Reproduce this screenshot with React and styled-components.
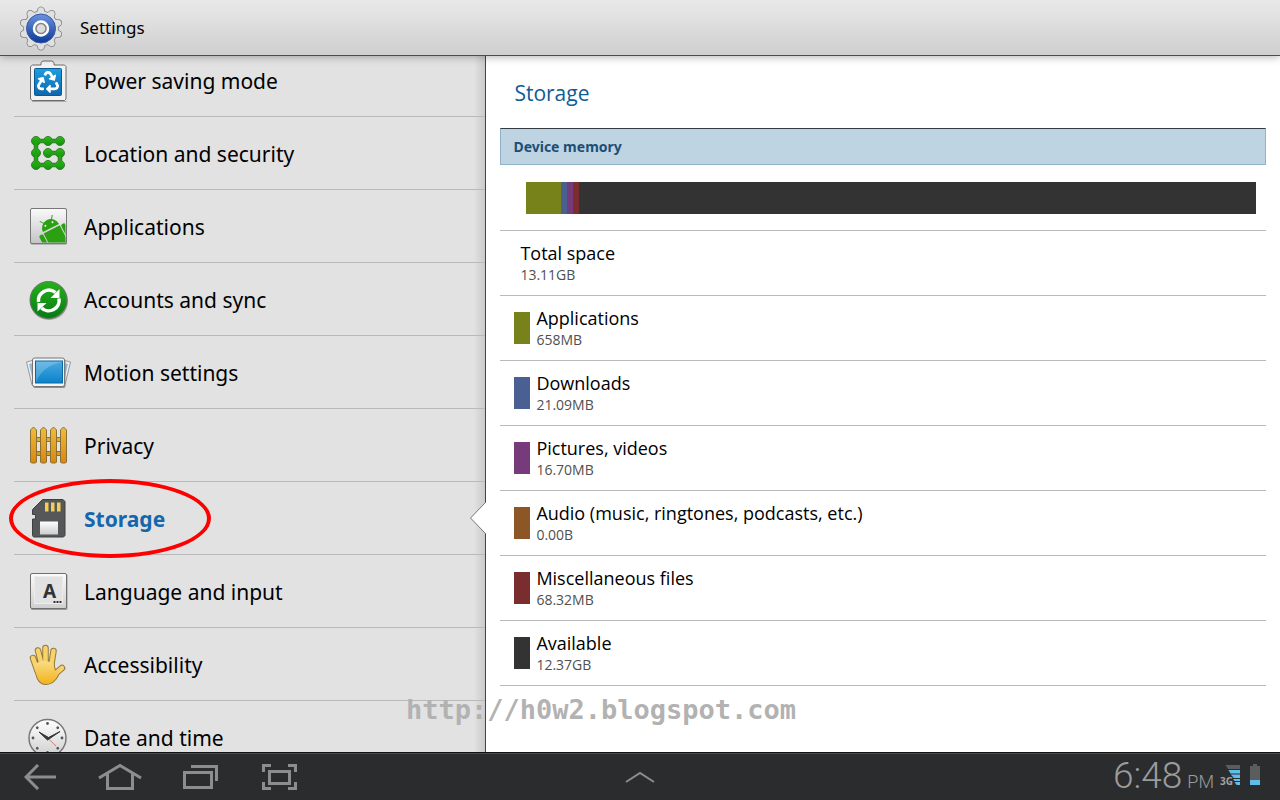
import { useId } from 'react'
import styled, { createGlobalStyle, ThemeProvider } from 'styled-components'
import { FaRecycle } from 'react-icons/fa'


const theme = {
  font: {
    main: '"Noto Sans", sans-serif',
    detail: '"Open Sans", sans-serif',
  },
  color: {
    sidebar: '#e2e2e2',
    accent: '#1666ad',
    heading: '#0f5c93',
    line: '#b9b9b9',
    bar: '#2b2c2e',
    glyph: '#8c8e8e',
  },
}

const GlobalStyle = createGlobalStyle`
  * {
    box-sizing: border-box;
  }

  body {
    margin: 0;
    background: #fff;
    font-family: ${theme.font.main};
    color: #000;
  }
`

const Page = styled.div`
  position: relative;
  display: flex;
  flex-direction: column;
  height: 100vh;
  overflow: hidden;
`

const Header = styled.header`
  position: relative;
  z-index: 1;
  flex: none;
  display: flex;
  align-items: center;
  gap: 15px;
  height: 56px;
  padding-left: 17px;
  background: linear-gradient(#e9e9e9, #cfcfcf);
  border-bottom: 1px solid #4c4c4c;
  box-shadow: 0 1px 8px rgba(0, 0, 0, 0.3);
`

const AppName = styled.h1`
  margin: 0;
  font-size: 17px;
  line-height: 24px;
  font-weight: 400;
`

const Body = styled.div`
  flex: 1;
  display: flex;
  min-height: 0;
`

const Sidebar = styled.nav`
  flex: 0 0 38%;
  overflow: hidden;
  background: linear-gradient(to left, #c8c8c8, ${props => props.theme.color.sidebar} 12px);
`

/* the list is scrolled a little way down */
const Menu = styled.ul`
  list-style: none;
  min-height: calc(100% + 12px);
  margin: -12px 0 0;
  padding: 0 0 0 14px;
  border-right: 1px solid #444;
`

const MenuItem = styled.li`
  position: relative;
  height: 73px;
  border-bottom: 1px solid ${props => props.theme.color.line};
`

const MenuLink = styled.a`
  display: flex;
  align-items: center;
  gap: 12px;
  height: 100%;
  padding-left: 10px;
  font-size: 21px;
  line-height: 28px;
  text-decoration: none;
  font-weight: ${props => (props.$active ? 700 : 400)};
  color: ${props => (props.$active ? props.theme.color.accent : '#000')};
`

const Label = styled.span`
  padding-top: 2px;
`

const Ring = styled.span`
  position: absolute;
  left: -5px;
  top: -3px;
  width: 202px;
  height: 79px;
  border: 4px solid #f00;
  border-radius: 50%;
  pointer-events: none;
`

const Pointer = styled.svg`
  position: absolute;
  right: -1px;
  top: 19px;
`

const Content = styled.main`
  flex: 1;
  min-width: 0;
  padding: 0 14px;
  background: #fff;
`

const Title = styled.h2`
  margin: 0;
  padding: 22px 14px 20px;
  font-family: ${props => props.theme.font.detail};
  font-size: 21px;
  line-height: 30px;
  font-weight: 400;
  color: ${props => props.theme.color.heading};
`

const SectionTitle = styled.h3`
  margin: 0;
  padding: 0 12px;
  font-size: 14px;
  line-height: 35px;
  color: #1c4f76;
  background: #bfd4e3;
  border: 1px solid #8fb2ca;
  border-top-color: #333b41;
`

const BarRow = styled.div`
  padding: 17px 10px 16px 26px;
  border-bottom: 1px solid ${props => props.theme.color.line};
`

const Bar = styled.div`
  display: flex;
  height: 32px;
  background: #333;
`

const Segment = styled.div`
  background: ${props => props.$color};
`

const Entries = styled.ul`
  list-style: none;
  margin: 0;
  padding: 0;
  font-family: ${props => props.theme.font.detail};
`

const Entry = styled.li`
  display: flex;
  align-items: center;
  gap: 6px;
  height: 65px;
  padding-left: ${props => (props.$indent ? '14px' : '20px')};
  border-bottom: 1px solid ${props => props.theme.color.line};
`

const Swatch = styled.span`
  width: 16px;
  height: 32px;
  background: ${props => props.$color};
`

const Name = styled.div`
  font-size: 18px;
  line-height: 24px;
`

const Size = styled.div`
  font-size: 14px;
  line-height: 20px;
  color: #505050;
`

const Watermark = styled.div`
  position: absolute;
  left: 406px;
  bottom: 74px;
  font: 700 27px/32px "DejaVu Sans Mono", monospace;
  color: #b2b2b2;
  pointer-events: none;
`

const SystemBar = styled.footer`
  flex: none;
  display: grid;
  grid-template-columns: 1fr auto 1fr;
  align-items: center;
  height: 48px;
  background: ${props => props.theme.color.bar};
  border-top: 1px solid #111;
  box-shadow: inset 0 1px #4a4b4d;
`

const Keys = styled.div`
  display: flex;
  align-items: center;
`

const Key = styled.button`
  display: flex;
  align-items: center;
  justify-content: center;
  width: 80px;
  height: 46px;
  padding: 0 0 4px;
  border: 0;
  background: none;
  color: ${props => props.theme.color.glyph};

  & svg {
    fill: none;
    stroke: currentColor;
    stroke-width: ${props => (props.$thin ? 2 : 3)};
  }
`

const Status = styled.div`
  display: flex;
  align-items: center;
  justify-content: flex-end;
  gap: 6px;
  padding-right: 20px;
  font-family: Roboto, sans-serif;
  color: #9a9c9c;
`

const Indicators = styled.div`
  display: flex;
  gap: 10px;
  padding-bottom: 4px;
`

const Clock = styled.time`
  display: flex;
  align-items: baseline;
  gap: 5px;
  font-size: 37px;
  line-height: 46px;
  font-weight: 300;
`

const Meridiem = styled.span`
  font-size: 18px;
`

const Icon = ({ from = '#fff', to = '#ccc', size = 48, children }) => {
  const id = useId()
  return (
    <svg width={size} height={size} viewBox="0 0 48 48" aria-hidden="true">
      <linearGradient id={id} x1="0" y1="0" x2="0" y2="1">
        <stop offset="0" stopColor={from} />
        <stop offset="1" stopColor={to} />
      </linearGradient>
      {children(`url(#${id})`)}
    </svg>
  )
}

const tooth = 'M20 9L21.500 4.500Q24 2 26.500 4.500L28 9Z'
const teeth = [...Array(10)].map((_, i) => (
  <path key={i} d={tooth} transform={`rotate(${i * 36} 24 24.500)`} />
))

const Gear = () => (
  <Icon from="#6c93e0" to="#0c3a96">
    {fill => (
      <>
        <g fill="#8a8a8a" stroke="#808080" strokeWidth="1.500">
          {teeth}
          <circle cx="24" cy="24.500" r="17" />
        </g>
        <g fill="#e0e0e0">
          {teeth}
          <circle cx="24" cy="24.500" r="17" />
        </g>
        <circle cx="24" cy="24.500" r="14.500" fill={fill} stroke="#3659a5" />
        <circle cx="24" cy="24.500" r="7" fill="#d4d4d4" stroke="#fff" strokeWidth="2.500" />
        <circle cx="24" cy="24.500" r="5" fill="#dcdcdc" stroke="#85868c" strokeWidth="1.500" />
      </>
    )}
  </Icon>
)

const PowerIcon = () => (
  <Icon from="#1d9fe0" to="#0f66ac">
    {fill => (
      <>
        <path d="M8 45.500H42.500" fill="none" stroke="#aaa" />
        <path d="M8.500 9H17V6.500L19 5H28L30 6.500V9H40.500L42 10.500V43L40.500 44.500H8.500L6.500 43V10.500Z" fill="#f2f2f2" stroke="#6c6c6c" />
        <rect x="10.500" y="12.500" width="27" height="27" rx="1" fill={fill} stroke="#0b5a94" />
        <FaRecycle x="13" y="15" size="22" color="#fff" />
      </>
    )}
  </Icon>
)

const LocationIcon = () => (
  <Icon from="#2fbd14" to="#0f8f10">
    {fill => (
      <>
        <path d="M36 12H12V36H36V24H24" stroke="#3c7d33" strokeWidth="4.500" fill="none" />
        <g fill={fill} stroke="#3c7d33">
          {[12, 24, 36].map(y => [12, 24, 36].map(x => <circle key={`${x}-${y}`} cx={x} cy={y} r="4.500" />))}
        </g>
        <path d="M36 12H12V36H36V24H24" stroke="#21a512" strokeWidth="2.500" fill="none" />
      </>
    )}
  </Icon>
)

const AppsIcon = () => (
  <Icon from="#fafafa" to="#c4c4c4">
    {fill => (
      <>
        <rect x="6.500" y="6.500" width="36.500" height="36" rx="1.500" fill="#888" />
        <rect x="6.500" y="6.500" width="36" height="35" rx="1.500" fill={fill} stroke="#777" />
        <clipPath id="apps-box"><rect x="8" y="8" width="33.500" height="32.500" /></clipPath>
        <g clipPath="url(#apps-box)">
          <g transform="translate(27 26) rotate(-27)" fill="#2aa012">
            <path d="M-9 0A9 9 0 0 1 9 0Z" />
            <path d="M-4-7L-7-11M4-7L7-11" stroke="#2aa012" />
            <circle cx="-4" cy="-4.500" r="1" fill="#fff" />
            <circle cx="4" cy="-4.500" r="1" fill="#fff" />
            <path d="M-9 1.500H9V22H-9Z" />
            <rect x="-14.500" y="1.500" width="4.500" height="13" rx="2" />
            <rect x="10" y="1.500" width="4.500" height="13" rx="2" />
          </g>
        </g>
      </>
    )}
  </Icon>
)

const SyncIcon = () => (
  <Icon from="#27b01b" to="#067a15">
    {fill => (
      <>
        <circle cx="25" cy="26" r="19" fill="#9b9b9b" />
        <circle cx="24.500" cy="25" r="18.500" fill={fill} stroke="#5f7a5c" />
        <g fill="none" stroke="#fff" strokeWidth="3.500">
          <path d="M14.500 27A10.500 10.500 0 0 1 31.500 17.500" />
          <path d="M35 23.500A10.500 10.500 0 0 1 17.500 33" />
        </g>
        <path d="M35.500 14V23H26.500ZM13.500 36.500V28H22.500Z" fill="#fff" />
      </>
    )}
  </Icon>
)

const MotionIcon = () => (
  <Icon from="#4ba9df" to="#0a83cb">
    {fill => (
      <>
        <path d="M10 12L2.500 14L8 37L12 38ZM39 12L46.500 14L41 37L37 38Z" fill="#eee" stroke="#999" />
        <path d="M9 15L5 16L9 33ZM40 15L44 16L40 33Z" fill="#8fbcdc" />
        <rect x="9" y="11" width="32.500" height="29" rx="2" fill="#8d8d8d" />
        <rect x="8.500" y="10" width="32" height="28.500" rx="2" fill="#f4f4f4" stroke="#777" />
        <rect x="11.500" y="13" width="27" height="22" fill={fill} stroke="#0868a5" />
        <path d="M12 34.500Q18 18 38 14V13.500H12Z" fill="#fff" opacity="0.2" />
      </>
    )}
  </Icon>
)

const PrivacyIcon = () => (
  <Icon from="#f0bd3c" to="#d9860f">
    {fill => (
      <g stroke="#8b7035">
        <rect x="8" y="16.500" width="34" height="4" fill="#dfae35" />
        <rect x="8" y="30.500" width="34" height="4" fill="#dd981f" />
        {[6.500, 16.500, 26.500, 36.500].map(x => (
          <path key={x} d={`M${x} 9L${x + 3} 6L${x + 6} 9V41L${x + 5} 42H${x + 1}L${x} 41Z`} fill={fill} />
        ))}
      </g>
    )}
  </Icon>
)

const StorageIcon = () => (
  <Icon from="#ffffff" to="#cccccc">
    {fill => (
      <>
        <path d="M18.500 5.500H39L41 7.500V41.500L39.500 43H9.500L8.500 41.500V25H11.500V20.500H8.500V15.500Z" fill="#555759" stroke="#3f4041" />
        <path d="M21 8.500h3.500v9H21ZM27 8.500h3.500v9H27ZM33 8.500h3.500v9H33Z" fill="#f0ce58" />
        <rect x="16" y="27.500" width="18" height="13" fill={fill} />
      </>
    )}
  </Icon>
)

const LanguageIcon = () => (
  <Icon from="#fbfbfb" to="#cfcfcf">
    {fill => (
      <>
        <rect x="7" y="7" width="36.500" height="36" rx="1.500" fill="#999" />
        <rect x="6.500" y="6.500" width="36" height="35" rx="1.500" fill={fill} stroke="#6f6f6f" />
        <rect x="10.500" y="9.500" width="28" height="27" fill="#e2e2e2" stroke="#ececec" />
        <text x="25.500" y="31" textAnchor="middle" fontSize="19" fontWeight="700" fontFamily="Noto Sans" fill="#333">A</text>
        <path d="M29.500 35H37.500" stroke="#333" strokeWidth="2" strokeDasharray="2 1" />
      </>
    )}
  </Icon>
)

const hand = 'M9 18L13.500 31M14 10.500L18 26M21.500 8V25M29.500 11L27 27M38 28L31 34'
const palm = 'M10.500 24C18 20 24 20 29.500 24L31 31L36 28C35 36 30 44 22 44C14 44 12 36 10.500 24Z'

const AccessibilityIcon = () => (
  <Icon from="#f8dd85" to="#f3b21c">
    {fill => (
      <g strokeLinecap="round" strokeLinejoin="round">
        <path d={hand} stroke="#94793c" strokeWidth="6.500" />
        <path d={palm} stroke="#94793c" strokeWidth="2" fill="#94793c" />
        <path d={hand} stroke="#f8d36a" strokeWidth="4.500" />
        <path d={palm} fill={fill} />
      </g>
    )}
  </Icon>
)

const DateIcon = () => (
  <Icon from="#ffffff" to="#cfcfcf">
    {fill => (
      <>
        <circle cx="23.500" cy="25" r="18.500" fill={fill} stroke="#777" strokeWidth="1.500" />
        <g fill="#555">
          {[...Array(8)].map((_, i) => (
            <circle key={i} cx="23.500" cy="10.500" r="1.400" transform={`rotate(${i * 45} 23.500 25)`} />
          ))}
        </g>
        <path d="M23.500 25L32 33" stroke="#d57a68" />
        <path d="M15 19L23.500 27L36 18.500L24.500 24.500Z" fill="#333" stroke="#333" />
      </>
    )}
  </Icon>
)

const menu = [
  { label: 'Power saving mode', icon: PowerIcon },
  { label: 'Location and security', icon: LocationIcon },
  { label: 'Applications', icon: AppsIcon },
  { label: 'Accounts and sync', icon: SyncIcon },
  { label: 'Motion settings', icon: MotionIcon },
  { label: 'Privacy', icon: PrivacyIcon },
  { label: 'Storage', icon: StorageIcon, active: true },
  { label: 'Language and input', icon: LanguageIcon },
  { label: 'Accessibility', icon: AccessibilityIcon },
  { label: 'Date and time', icon: DateIcon },
]

const entries = [
  { name: 'Total space', size: '13.11GB' },
  { name: 'Applications', size: '658MB', color: '#77831a', share: 35 },
  { name: 'Downloads', size: '21.09MB', color: '#4a6093', share: 6 },
  { name: 'Pictures, videos', size: '16.70MB', color: '#773a7b', share: 6 },
  { name: 'Audio (music, ringtones, podcasts, etc.)', size: '0.00B', color: '#8d5626' },
  { name: 'Miscellaneous files', size: '68.32MB', color: '#7a2d2f', share: 6 },
  { name: 'Available', size: '12.37GB', color: '#333', share: 677 },
]

const SignalIcon = () => (
  <svg width="20" height="26" viewBox="0 0 20 26" role="img" aria-label="3G signal">
    <path d="M5.500 1H20V5H8Z" fill="#5a5c5d" />
    <path d="M8.500 6H20V9.500H10.500ZM11 10.500H20V14H13ZM13 15H20V17H14.500ZM14.500 18H20V21H16.500Z" fill="#5fbdec" />
    <text x="0" y="21" fontSize="10" fontWeight="700" fontFamily="Open Sans" fill="#a0a2a2" stroke="#2b2c2e" strokeWidth="2" paintOrder="stroke">3G</text>
  </svg>
)

const BatteryIcon = () => (
  <svg width="10" height="26" viewBox="0 0 10 26" role="img" aria-label="Battery">
    <path d="M3 0H7V2H10V16H0V2H3Z" fill="#5a5c5d" />
    <path d="M0 16H10V21H0Z" fill="#5fbdec" />
  </svg>
)

const App = () => (
  <ThemeProvider theme={theme}>
    <GlobalStyle />
    <Page>
      <Header>
        <Gear />
        <AppName>Settings</AppName>
      </Header>
      <Body>
        <Sidebar>
          <Menu>
            {menu.map(({ label, icon: ItemIcon, active }) => (
              <MenuItem key={label}>
                <MenuLink href="#" $active={active}>
                  <ItemIcon />
                  <Label>{label}</Label>
                </MenuLink>
                {active && <Ring />}
                {active && (
                  <Pointer width="17" height="34" viewBox="0 0 17 34">
                    <path d="M17 1L1.500 17L17 33" fill="#fff" stroke="#777" />
                  </Pointer>
                )}
              </MenuItem>
            ))}
          </Menu>
        </Sidebar>
        <Content>
          <Title>Storage</Title>
          <SectionTitle>Device memory</SectionTitle>
          <BarRow>
            <Bar>
              {entries.filter(({ share }) => share).map(({ name, color, share }) => (
                <Segment key={name} $color={color} style={{ flexGrow: share }} />
              ))}
            </Bar>
          </BarRow>
          <Entries>
            {entries.map(({ name, size, color }) => (
              <Entry key={name} $indent={Boolean(color)}>
                {color && <Swatch $color={color} />}
                <div>
                  <Name>{name}</Name>
                  <Size>{size}</Size>
                </div>
              </Entry>
            ))}
          </Entries>
        </Content>
      </Body>
      <SystemBar>
        <Keys>
          <Key aria-label="Back">
            <svg width="32" height="26" viewBox="0 0 32 26"><path d="M32 13H3M14 1L2 13L14 25" /></svg>
          </Key>
          <Key aria-label="Home">
            <svg width="44" height="28" viewBox="0 0 44 28"><path d="M1 15L22 2.500L43 15M9.500 11V25.500H34.500V11" /></svg>
          </Key>
          <Key aria-label="Recent apps">
            <svg width="36" height="26" viewBox="0 0 36 26"><path d="M2.500 8.500H29.500V23.500H2.500ZM9 2.500H34.500V17" /></svg>
          </Key>
          <Key aria-label="Screenshot">
            <svg width="36" height="28" viewBox="0 0 36 28"><path d="M7.500 8.500H27.500V20.500H7.500ZM1.500 9V2.500H9M26 2.500H33.500V9M33.500 19V25.500H26M9 25.500H1.500V19" /></svg>
          </Key>
        </Keys>
        <Key aria-label="Show quick panel" $thin>
          <svg width="30" height="12" viewBox="0 0 30 12"><path d="M1 11L15 2L29 11" /></svg>
        </Key>
        <Status>
          <Clock>
            6:48
            <Meridiem>PM</Meridiem>
          </Clock>
          <Indicators>
            <SignalIcon />
            <BatteryIcon />
          </Indicators>
        </Status>
      </SystemBar>
      <Watermark>http://h0w2.blogspot.com</Watermark>
    </Page>
  </ThemeProvider>
)

export default App
